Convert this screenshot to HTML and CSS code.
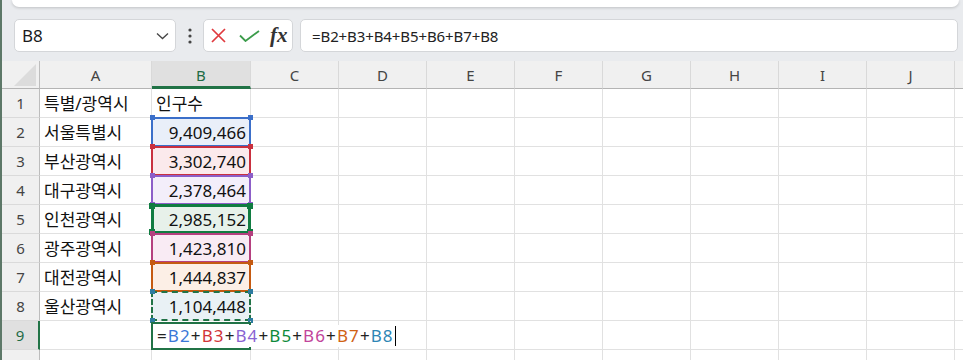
FILE: index.html
```html
<!DOCTYPE html>
<html lang="ko">
  <head>
    <meta charset="UTF-8" />
    <title>Sheet1 - Excel</title>
    <link rel="stylesheet" href="styles.css">
  </head>
  <body>
    <div class="app">
      <div class="edge"></div>
      <div class="main">
        <div class="ribbon"></div>

        <div class="formula-row">
          <div class="namebox">
            <span>B8</span>
            <svg width="13" height="8" viewBox="0 0 13 8"><path d="M1 1.5 6.5 6.5 12 1.5" fill="none" stroke="#444" stroke-width="1.3"/></svg>
          </div>
          <div class="dots">
            <svg width="4" height="16" viewBox="0 0 4 16"><circle cx="2" cy="2" r="1.6" fill="#444"/><circle cx="2" cy="8" r="1.6" fill="#444"/><circle cx="2" cy="14" r="1.6" fill="#444"/></svg>
          </div>
          <div class="fx-box">
            <svg class="cancel" width="15" height="15" viewBox="0 0 15 15"><path d="M1 1 14 14M14 1 1 14" stroke="#e0393e" stroke-width="1.7"/></svg>
            <svg class="enter" width="21" height="12" viewBox="0 0 21 12"><path d="M1 5.5 6.5 11 20 1" fill="none" stroke="#3c9c4b" stroke-width="1.8"/></svg>
            <span class="fx">fx</span>
          </div>
          <div class="formula-input">=B2+B3+B4+B5+B6+B7+B8</div>
        </div>

        <div class="sheet">
          <div class="row head">
            <div class="corner"><svg width="22" height="22" viewBox="0 0 22 22"><path d="M22 0V22H0Z" fill="#dcdcdc"/></svg></div>
            <div class="ch">A</div>
            <div class="ch sel">B</div>
            <div class="ch">C</div>
            <div class="ch">D</div>
            <div class="ch">E</div>
            <div class="ch">F</div>
            <div class="ch">G</div>
            <div class="ch">H</div>
            <div class="ch">I</div>
            <div class="ch">J</div>
            <div class="ch"></div>
          </div>

          <div class="row">
            <div class="rh">1</div>
            <div class="c">특별/광역시</div>
            <div class="c">인구수</div>
            <div class="c"></div><div class="c"></div><div class="c"></div><div class="c"></div><div class="c"></div><div class="c"></div><div class="c"></div><div class="c"></div><div class="c"></div>
          </div>
          <div class="row">
            <div class="rh">2</div>
            <div class="c">서울특별시</div>
            <div class="c num r-blue">9,409,466<div class="rng"></div></div>
            <div class="c"></div><div class="c"></div><div class="c"></div><div class="c"></div><div class="c"></div><div class="c"></div><div class="c"></div><div class="c"></div><div class="c"></div>
          </div>
          <div class="row">
            <div class="rh">3</div>
            <div class="c">부산광역시</div>
            <div class="c num r-red">3,302,740<div class="rng"></div></div>
            <div class="c"></div><div class="c"></div><div class="c"></div><div class="c"></div><div class="c"></div><div class="c"></div><div class="c"></div><div class="c"></div><div class="c"></div>
          </div>
          <div class="row">
            <div class="rh">4</div>
            <div class="c">대구광역시</div>
            <div class="c num r-purple">2,378,464<div class="rng"></div></div>
            <div class="c"></div><div class="c"></div><div class="c"></div><div class="c"></div><div class="c"></div><div class="c"></div><div class="c"></div><div class="c"></div><div class="c"></div>
          </div>
          <div class="row">
            <div class="rh">5</div>
            <div class="c">인천광역시</div>
            <div class="c num r-green">2,985,152<div class="rng"></div></div>
            <div class="c"></div><div class="c"></div><div class="c"></div><div class="c"></div><div class="c"></div><div class="c"></div><div class="c"></div><div class="c"></div><div class="c"></div>
          </div>
          <div class="row">
            <div class="rh">6</div>
            <div class="c">광주광역시</div>
            <div class="c num r-pink">1,423,810<div class="rng"></div></div>
            <div class="c"></div><div class="c"></div><div class="c"></div><div class="c"></div><div class="c"></div><div class="c"></div><div class="c"></div><div class="c"></div><div class="c"></div>
          </div>
          <div class="row">
            <div class="rh">7</div>
            <div class="c">대전광역시</div>
            <div class="c num r-orange">1,444,837<div class="rng"></div></div>
            <div class="c"></div><div class="c"></div><div class="c"></div><div class="c"></div><div class="c"></div><div class="c"></div><div class="c"></div><div class="c"></div><div class="c"></div>
          </div>
          <div class="row">
            <div class="rh">8</div>
            <div class="c">울산광역시</div>
            <div class="c num r-teal">1,104,448<div class="rng"></div></div>
            <div class="c"></div><div class="c"></div><div class="c"></div><div class="c"></div><div class="c"></div><div class="c"></div><div class="c"></div><div class="c"></div><div class="c"></div>
          </div>
          <div class="row">
            <div class="rh sel">9</div>
            <div class="c"></div>
            <div class="c editing">
              <div class="active"></div>
              <span class="entry">=<b class="f-blue">B2</b>+<b class="f-red">B3</b>+<b class="f-purple">B4</b>+<b class="f-green">B5</b>+<b class="f-pink">B6</b>+<b class="f-orange">B7</b>+<b class="f-teal">B8</b><i class="caret"></i></span>
            </div>
            <div class="c"></div><div class="c"></div><div class="c"></div><div class="c"></div><div class="c"></div><div class="c"></div><div class="c"></div><div class="c"></div><div class="c"></div>
          </div>
          <div class="row">
            <div class="rh"></div>
            <div class="c"></div><div class="c"></div>
            <div class="c"></div><div class="c"></div><div class="c"></div><div class="c"></div><div class="c"></div><div class="c"></div><div class="c"></div><div class="c"></div><div class="c"></div>
          </div>
        </div>
      </div>
    </div>
  </body>
</html>
```

FILE: styles.css
```css
body {
  margin: 0;
  background: #e9ebee;
  font-family: "Noto Sans", "Noto Sans CJK KR", sans-serif;
  color: #111;
}

.app {
  width: 963px;
  height: 360px;
  display: flex;
  overflow: hidden;
  background: #e9ebee;
}

.edge {
  width: 2px;
  flex-shrink: 0;
  background: #5d7868;
}

.main {
  flex: 1;
  min-width: 0;
}

/* ribbon bottom edge, mostly scrolled off */
.ribbon {
  height: 7px;
  margin: 0 4px 0 10px;
  background: #fff;
  border-radius: 0 0 8px 8px;
  box-shadow: 0 1px 3px rgba(0, 0, 0, 0.18);
}

.formula-row {
  display: flex;
  height: 33px;
  margin-top: 12px;
  padding-left: 12px;
}

.namebox {
  width: 162px;
  box-sizing: border-box;
  background: #fff;
  border: 1px solid #d4d6d9;
  border-radius: 5px;
  display: flex;
  align-items: center;
  justify-content: space-between;
  padding: 0 6px 0 7px;
  font-size: 17px;
  color: #1b1b1b;
}

.dots {
  width: 27px;
  display: flex;
  align-items: center;
  justify-content: center;
}

.fx-box {
  width: 90px;
  box-sizing: border-box;
  background: #fff;
  border: 1px solid #d4d6d9;
  border-radius: 5px;
  display: flex;
  align-items: center;
  padding-left: 7px;
}

.enter {
  margin-left: 13px;
}

.fx {
  margin-left: 10px;
  font-family: "Liberation Serif", serif;
  font-style: italic;
  font-weight: bold;
  font-size: 21px;
  color: #333;
}

.formula-input {
  flex: 1;
  margin-left: 7px;
  margin-right: 5px;
  box-sizing: border-box;
  background: #fff;
  border: 1px solid #d4d6d9;
  border-radius: 5px;
  display: flex;
  align-items: center;
  padding-left: 11px;
  font-size: 15px;
  letter-spacing: -0.1px;
  color: #222;
}

/* grid */
.sheet {
  margin-top: 9px;
  background: #fff;
}

.row {
  display: grid;
  grid-template-columns: 38px 112px 99px repeat(9, 88px);
  height: 29px;
}

.row.head {
  height: 28px;
}

.corner,
.ch {
  box-sizing: border-box;
  background: #f0f0f0;
  border-right: 1px solid #d9d9d9;
  border-bottom: 1px solid #b4b4b4;
}

.corner {
  display: flex;
  align-items: flex-end;
  justify-content: flex-end;
  padding: 0 3px 2px 0;
  border-right-color: #bdbdbd;
}

.ch {
  display: flex;
  align-items: center;
  justify-content: center;
  font-size: 15px;
  color: #444;
}

.ch.sel {
  background: #e0e0e0;
  border-bottom: 3px solid #217346;
  color: #1e6b45;
  padding-top: 2px;
}

.rh {
  box-sizing: border-box;
  background: #f0f0f0;
  border-right: 1px solid #bdbdbd;
  border-bottom: 1px solid #dadada;
  display: flex;
  align-items: center;
  justify-content: center;
  font-size: 15px;
  color: #444;
}

.rh.sel {
  background: #e0e0e0;
  border-right: 2px solid #217346;
  color: #1e6b45;
}

.c {
  box-sizing: border-box;
  border-right: 1px solid #e1e1e1;
  border-bottom: 1px solid #e1e1e1;
  display: flex;
  align-items: center;
  padding: 0 4px;
  font-size: 17px;
  line-height: 1;
  white-space: nowrap;
}

.num {
  position: relative;
  justify-content: flex-end;
}

/* formula reference ranges */
.rng {
  position: absolute;
  top: -1px;
  left: -1px;
  right: -1px;
  bottom: -1px;
  border: 2px solid var(--c);
}

.rng::before,
.rng::after {
  content: "";
  position: absolute;
  left: -3px;
  width: 5px;
  height: 5px;
  background: var(--h, var(--c));
  box-shadow: 98px 0 0 var(--h, var(--c));
}

.rng::before { top: -4px; }
.rng::after { bottom: -4px; }

.r-blue { background: #e9eff9; --c: #3b6fc9; }
.r-red { background: #fbeaec; --c: #c9303f; }
.r-purple { background: #f3eefa; --c: #8c5ec8; }
.r-green { background: #e7f1ea; --c: #107c41; }
.r-pink { background: #f9ebf4; --c: #b5407f; }
.r-orange { background: #fcefe6; --c: #c55a11; }
.r-teal { background: #e9f1f5; --c: #217346; --h: #2e7ba0; }

.r-green .rng {
  border-width: 3px;
}

.r-green .rng::before,
.r-green .rng::after {
  left: -5px;
  width: 6px;
  height: 6px;
}

.r-teal .rng {
  border-style: dashed;
}

/* cell being edited */
.editing {
  position: relative;
  z-index: 2;
  overflow: visible;
  padding-left: 5px;
}

.entry {
  position: relative;
  display: flex;
  align-items: center;
  height: 22px;
  margin-top: 1px;
  padding-right: 6px;
  background: #fff;
  letter-spacing: 1.1px;
  color: #222;
}

.entry b {
  font-weight: normal;
}

.f-blue { color: #3b78d8; }
.f-red { color: #d13438; }
.f-purple { color: #8a63d2; }
.f-green { color: #0e8a3a; }
.f-pink { color: #c2459b; }
.f-orange { color: #d06214; }
.f-teal { color: #2e86b5; }

.caret {
  width: 1px;
  height: 20px;
  background: #000;
  margin-left: 1px;
}

.active {
  position: absolute;
  top: 1px;
  left: -1px;
  right: -1px;
  bottom: -1px;
  border: 2px solid #217346;
}
```
